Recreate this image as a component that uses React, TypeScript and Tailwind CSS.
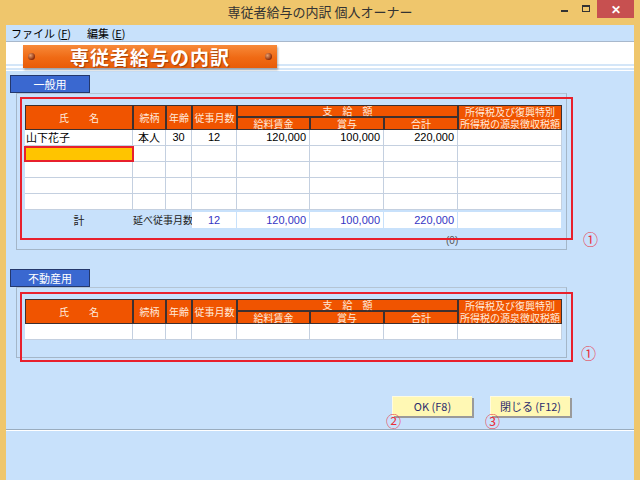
import React from "react";

const FONT = { fontFamily: '"Noto Sans CJK JP", "Noto Sans", sans-serif' };
const NUMFONT = { fontFamily: '"Liberation Sans", "Noto Sans CJK JP", sans-serif' };

const hdr =
  "bg-[#f05400] border border-[#3c3030] text-[#ffeadc] text-[10px] leading-[10px] flex items-center justify-center whitespace-nowrap";

function Header() {
  return (
    <div className="grid grid-cols-[108px_33px_26px_45px_73px_74px_74px_104px] grid-rows-[12px_13px]">
      <div className={`${hdr} row-span-2`}>氏　　名</div>
      <div className={`${hdr} row-span-2`}>続柄</div>
      <div className={`${hdr} row-span-2`}>年齢</div>
      <div className={`${hdr} row-span-2`}>従事月数</div>
      <div className={`${hdr} col-span-3`}>支　給　額</div>
      <div className={`${hdr} row-span-2 flex-col gap-[2px] text-[9.5px]`}>
        <span>所得税及び復興特別</span>
        <span>所得税の源泉徴収税額</span>
      </div>
      <div className={hdr}>給料賃金</div>
      <div className={hdr}>賞与</div>
      <div className={hdr}>合計</div>
    </div>
  );
}

const cell = "h-[16px] bg-white border-r border-b border-[#c4d0e0] text-[11px] leading-[15px] text-black";

function Row({
  name = "",
  rel = "",
  age = "",
  months = "",
  salary = "",
  bonus = "",
  total = "",
  selected = false,
}: {
  name?: string;
  rel?: string;
  age?: string;
  months?: string;
  salary?: string;
  bonus?: string;
  total?: string;
  selected?: boolean;
}) {
  return (
    <div className="grid grid-cols-[108px_33px_26px_45px_73px_74px_74px_104px]">
      {selected ? (
        <div className="h-[16px] bg-[#ffc400] border-2 border-[#e8202c] -ml-[1px] w-[110px] -mb-[2px] relative z-10" />
      ) : (
        <div className={`${cell} pl-[1px]`}>{name}</div>
      )}
      <div className={`${cell} text-center`}>{rel}</div>
      <div className={`${cell} text-center`} style={NUMFONT}>{age}</div>
      <div className={`${cell} text-center`} style={NUMFONT}>{months}</div>
      <div className={`${cell} text-right pr-[3px]`} style={NUMFONT}>{salary}</div>
      <div className={`${cell} text-right pr-[3px]`} style={NUMFONT}>{bonus}</div>
      <div className={`${cell} text-right pr-[3px] text-[#3434c4]`} style={NUMFONT}>{total}</div>
      <div className={cell} />
    </div>
  );
}

function TotalRow() {
  const tc = "h-[16px] bg-white border-r border-[#c8e1fb] text-[11px] leading-[16px] text-[#3434c4]";
  return (
    <div className="grid grid-cols-[108px_59px_45px_73px_74px_74px_104px] mt-[2px]">
      <div className="h-[16px] text-[11px] leading-[16px] text-center text-[#222]">計</div>
      <div className="h-[16px] text-[10px] leading-[16px] text-right pr-[1px] text-[#222] whitespace-nowrap">延べ従事月数</div>
      <div className={`${tc} text-center`} style={NUMFONT}>12</div>
      <div className={`${tc} text-right pr-[3px]`} style={NUMFONT}>120,000</div>
      <div className={`${tc} text-right pr-[3px]`} style={NUMFONT}>100,000</div>
      <div className={`${tc} text-right pr-[3px]`} style={NUMFONT}>220,000</div>
      <div className={tc} />
    </div>
  );
}

function Tab({ label }: { label: string }) {
  return (
    <div className="ml-[4px] w-[80px] h-[18px] bg-[#3a68d0] border border-[#24386c] text-white text-[11px] leading-[16px] text-center">
      {label}
    </div>
  );
}

function Circled({ n, className }: { n: string; className: string }) {
  return (
    <div className={`absolute text-[#e8303c] text-[15px] leading-none ${className}`}>{n}</div>
  );
}

export default function App() {
  return (
    <div className="w-[640px] h-[480px] bg-[#efc66c] flex flex-col overflow-hidden" style={FONT}>
      {/* Title bar */}
      <div className="h-[25px] grid grid-cols-[1fr_auto_1fr] items-start">
        <div />
        <div className="text-[13px] text-[#333] pt-[4px] leading-[16px]">専従者給与の内訳 個人オーナー</div>
        <div className="flex justify-end items-start pr-[6px]">
          <div className="w-[22px] h-[17px] flex items-center justify-center">
            <div className="w-[7px] h-[2px] bg-[#333] mt-[4px]" />
          </div>
          <div className="w-[22px] h-[17px] flex items-center justify-center">
            <div className="w-[8px] h-[7px] border border-[#333] border-t-2" />
          </div>
          <div className="w-[37px] h-[18px] bg-[#c75050] flex items-center justify-center text-white text-[12px] font-bold leading-none">
            ✕
          </div>
        </div>
      </div>

      {/* Client area */}
      <div className="flex-1 mx-[6px] bg-[#c8e1fb] flex flex-col relative">
        {/* Menu */}
        <div className="h-[17px] flex items-center gap-[16px] pl-[5px] text-[11px] text-black border-b border-[#a8b8cc]">
          <span>
            ファイル (<span className="underline">F</span>)
          </span>
          <span>
            編集 (<span className="underline">E</span>)
          </span>
        </div>

        {/* Banner band */}
        <div className="h-[30px] bg-[linear-gradient(to_bottom,#ffffff_0px,#ffffff_22px,#d4e6f8_22px,#d4e6f8_24px,#ffffff_24px,#ffffff_26px,#d4e6f8_26px,#d4e6f8_28px,#ffffff_28px,#ffffff_29px,#c8e1fb_29px)]">
          <div className="ml-[17px] mt-[3px] w-[254px] h-[23px] bg-[linear-gradient(to_bottom,#f78a3a,#f06a14_55%,#e85c08)] shadow-[1px_2px_2px_rgba(80,80,80,0.45)] flex items-center justify-between px-[5px]">
            <div className="w-[7px] h-[7px] rounded-full bg-[radial-gradient(circle_at_35%_35%,#e8a070,#8a2a08_70%)]" />
            <div className="text-white text-[19px] font-bold leading-none tracking-[1px] [text-shadow:1px_1px_1px_rgba(120,40,0,0.6)]">
              専従者給与の内訳
            </div>
            <div className="w-[7px] h-[7px] rounded-full bg-[radial-gradient(circle_at_35%_35%,#e8a070,#8a2a08_70%)]" />
          </div>
        </div>

        {/* Section 1 */}
        <div className="mt-[3px] relative">
          <Tab label="一般用" />
          <div className="ml-[10px] w-[551px] h-[157px] border border-[#a4b6c8] border-t-[#b4c4d4] pt-[11px] pl-[8px] relative">
            <Header />
            <Row name="山下花子" rel="本人" age="30" months="12" salary="120,000" bonus="100,000" total="220,000" />
            <Row selected />
            <Row />
            <Row />
            <Row />
            <TotalRow />
            <div className="text-[10px] text-[#555] leading-none mt-[8px] pl-[421px]" style={NUMFONT}>(0)</div>
          </div>
          <div className="absolute left-[14px] top-[22px] w-[553px] h-[143px] border-2 border-[#e8202c] pointer-events-none" />
          <Circled n="①" className="left-[577px] top-[156px]" />
        </div>

        {/* Section 2 */}
        <div className="mt-[19px] relative">
          <Tab label="不動産用" />
          <div className="ml-[10px] w-[551px] h-[71px] border border-[#a4b6c8] border-t-[#b4c4d4] pt-[11px] pl-[8px]">
            <Header />
            <Row />
          </div>
          <div className="absolute left-[14px] top-[23px] w-[553px] h-[70px] border-2 border-[#e8202c] pointer-events-none" />
          <Circled n="①" className="left-[575px] top-[76px]" />
        </div>

        {/* Buttons */}
        <div className="mt-[38px] flex gap-[18px] pl-[386px] relative h-[33px]">
          <div className="w-[80px] h-[20px] bg-[#fff8b4] border-t border-l border-[#fffbe0] shadow-[2px_2px_0_#9a9a9a] text-[11px] leading-[19px] text-center text-[#2c2c6c]">
            OK (F8)
          </div>
          <div className="w-[80px] h-[20px] bg-[#fff8b4] border-t border-l border-[#fffbe0] shadow-[2px_2px_0_#9a9a9a] text-[11px] leading-[19px] text-center text-[#2c2c6c]">
            閉じる (F12)
          </div>
          <Circled n="②" className="left-[380px] top-[17px]" />
          <Circled n="③" className="left-[479px] top-[17px]" />
        </div>

        {/* Separator and bottom area */}
        <div className="h-[2px] border-t border-[#9aacbe] border-b border-b-white" />
        <div className="flex-1" />
      </div>
    </div>
  );
}
